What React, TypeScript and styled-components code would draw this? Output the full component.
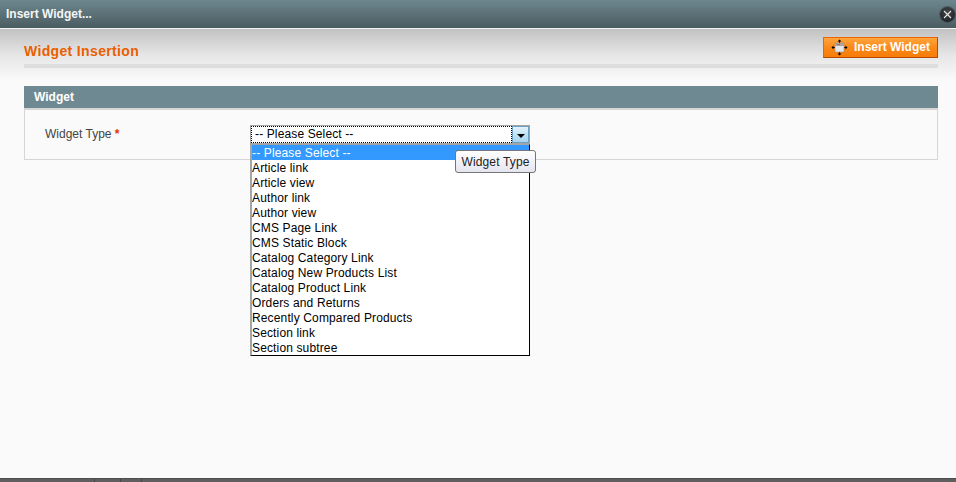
import React from "react";
import styled, { createGlobalStyle } from "styled-components";

const OPTIONS = [
  "-- Please Select --",
  "Article link",
  "Article view",
  "Author link",
  "Author view",
  "CMS Page Link",
  "CMS Static Block",
  "Catalog Category Link",
  "Catalog New Products List",
  "Catalog Product Link",
  "Orders and Returns",
  "Recently Compared Products",
  "Section link",
  "Section subtree",
];

const GlobalStyle = createGlobalStyle`
  html, body {
    margin: 0;
    padding: 0;
    height: 100%;
    overflow: hidden;
    background: #fafafa;
  }
  body {
    font-family: "Liberation Sans", Arial, sans-serif;
    font-size: 12px;
  }
`;

const Page = styled.div`
  width: 956px;
  height: 482px;
  display: flex;
  flex-direction: column;
  background: #fafafa;
`;

const TitleBar = styled.header`
  height: 27px;
  flex: none;
  display: flex;
  align-items: center;
  justify-content: space-between;
  padding: 0 1px 1px 6px;
  border-bottom: 1px solid #f4f6f6;
  background: linear-gradient(to bottom, #6d868d 0%, #4a5c62 100%);
`;

const Title = styled.span`
  color: #f4f6f6;
  font-weight: bold;
  font-size: 12px;
`;

const CloseButton = styled.button`
  width: 15px;
  height: 15px;
  padding: 0;
  margin: 1px 0 0;
  border: 0;
  border-radius: 50%;
  background: radial-gradient(circle at 50% 35%, #44484b, #15181a);
  box-shadow: 0 0 0 1px rgba(60, 75, 80, 0.6);
  display: flex;
  align-items: center;
  justify-content: center;
`;

const Content = styled.main`
  flex: 1;
  display: flex;
  flex-direction: column;
  padding: 9px 18px 0 24px;
  background: linear-gradient(to bottom, #c2c2c2 0px, #e6e6e6 26px, #fafafa 52px);
`;

const ContentHeader = styled.div`
  height: 25px;
  display: flex;
  align-items: center;
  justify-content: space-between;
  padding-bottom: 1px;
  border-bottom: 4px solid #dedede;
  box-sizing: content-box;
`;

const Heading = styled.h3`
  margin: 1px 0 0;
  color: #eb5e00;
  font-size: 14px;
  font-weight: bold;
  letter-spacing: 0.35px;
`;

const InsertButton = styled.button`
  width: 115px;
  height: 21px;
  margin-top: -6px;
  padding: 0 0 0 7px;
  display: flex;
  align-items: center;
  gap: 6px;
  box-sizing: border-box;
  border: 1px solid #ed6502;
  border-bottom-color: #b54a00;
  border-right-color: #b54a00;
  background: linear-gradient(to bottom, #ffa63f 0%, #fb8a1b 45%, #f77c08 100%);
  color: #fff;
  font-family: "Liberation Sans", Arial, sans-serif;
  font-size: 12px;
  font-weight: bold;
`;

const ButtonLabel = styled.span`
  line-height: 15px;
  margin-top: -1px;
`;

const SectionHead = styled.div`
  margin-top: 18px;
  height: 22px;
  display: flex;
  align-items: center;
  padding-left: 10px;
  background: #6f8992;
  color: #fff;
  font-size: 12px;
  font-weight: bold;
`;

const Fieldset = styled.section`
  height: 52px;
  box-sizing: border-box;
  border: 1px solid #d6d6d6;
  border-top-width: 2px;
  padding: 15px 0 0 20px;
  display: flex;
  align-items: flex-start;
`;

const Label = styled.label`
  width: 205px;
  flex: none;
  padding-top: 2px;
  color: #444;
  font-size: 12px;
`;

const Required = styled.span`
  color: #eb340a;
  font-weight: bold;
`;

const SelectWrap = styled.div`
  position: relative;
  width: 280px;
  height: 19px;
`;

const SelectBox = styled.div`
  height: 19px;
  box-sizing: border-box;
  border: 1px solid #a5a5a5;
  border-right-color: #9aa7ad;
  background: #fff;
  display: flex;
  align-items: stretch;
`;

const SelectValue = styled.div`
  flex: 1;
  outline: 1px dotted #000;
  outline-offset: -1px;
  padding-left: 4px;
  line-height: 16px;
  color: #000;
  font-size: 12px;
  letter-spacing: 0.13px;
`;

const Arrow = styled.div`
  width: 17px;
  flex: none;
  box-sizing: border-box;
  border: 1px solid #6f9fc0;
  background: linear-gradient(to bottom, #e4f3fb 0%, #bfe2f5 50%, #a6d5ef 100%);
  display: flex;
  align-items: center;
  justify-content: center;
`;

const ArrowGlyph = styled.span`
  width: 0;
  height: 0;
  margin-top: 2px;
  border-left: 4px solid transparent;
  border-right: 4px solid transparent;
  border-top: 4px solid #000;
`;

const Dropdown = styled.ul`
  position: absolute;
  z-index: 2;
  top: 19px;
  left: 0;
  width: 280px;
  height: 212px;
  box-sizing: border-box;
  margin: 0;
  padding: 0;
  list-style: none;
  background: #fff;
  border: 1px solid #000;
  border-left: 2px solid #a5a5a5;
  border-top: 1px solid #a5a5a5;
`;

const Option = styled.li<{ $active?: boolean }>`
  height: 15px;
  line-height: 17px;
  font-size: 12px;
  letter-spacing: 0.14px;
  white-space: nowrap;
  color: ${(p) => (p.$active ? "#fff" : "#000")};
  background: ${(p) => (p.$active ? "#3399ff" : "transparent")};
`;

const Tooltip = styled.div`
  position: absolute;
  z-index: 3;
  top: 25px;
  left: 205px;
  width: 81px;
  height: 23px;
  box-sizing: border-box;
  border: 1px solid #767676;
  border-radius: 3px;
  background: linear-gradient(to bottom, #ffffff 0%, #e5e5f0 100%);
  color: #222;
  font-size: 12px;
  letter-spacing: 0.15px;
  line-height: 23px;
  text-align: center;
  white-space: nowrap;
`;

const FooterBar = styled.footer`
  height: 4px;
  flex: none;
  display: flex;
  background: #5e5e5e;
  border-top: 1px solid #4e4e4e;
  box-sizing: border-box;
`;

const FooterTab = styled.span<{ $width: number }>`
  width: ${(p) => p.$width}px;
  flex: none;
  box-sizing: border-box;
  border-right: 1px solid #444;
`;

const App = () => {
  return (
    <Page>
      <GlobalStyle />
      <TitleBar>
        <Title>Insert Widget...</Title>
        <CloseButton aria-label="Close">
          <svg width="9" height="9" viewBox="0 0 9 9">
            <path d="M1 1L8 8M8 1L1 8" stroke="#e8e8e8" strokeWidth="1.1" />
          </svg>
        </CloseButton>
      </TitleBar>
      <Content>
        <ContentHeader>
          <Heading>Widget Insertion</Heading>
          <InsertButton>
            <svg width="17" height="17" viewBox="0 0 17 17">
              <path d="M8.5 2V4M8.5 13V15M2 8.5H4M13 8.5H15" stroke="#000" />
              <path
                d="M8.5 0.5L10.5 2.5H6.5ZM8.5 16.5L6.5 14.5H10.5ZM0.5 8.5L2.5 6.5V10.5ZM16.5 8.5L14.5 10.5V6.5Z"
                fill="#000"
              />
              <rect x="4" y="4" width="9" height="9" fill="#e4e7ec" stroke="#8d8d8d" strokeWidth="0.6" />
              <rect x="4" y="4" width="9" height="3" fill="#a9a4a0" />
              <rect x="6" y="5" width="3" height="1" fill="#d9534a" />
            </svg>
            <ButtonLabel>Insert Widget</ButtonLabel>
          </InsertButton>
        </ContentHeader>
        <SectionHead>Widget</SectionHead>
        <Fieldset>
          <Label>
            Widget Type <Required>*</Required>
          </Label>
          <SelectWrap>
            <SelectBox>
              <SelectValue>-- Please Select --</SelectValue>
              <Arrow>
                <ArrowGlyph />
              </Arrow>
            </SelectBox>
            <Dropdown>
              {OPTIONS.map((name, i) => (
                <Option key={name} $active={i === 0}>
                  {name}
                </Option>
              ))}
            </Dropdown>
            <Tooltip>Widget Type</Tooltip>
          </SelectWrap>
        </Fieldset>
      </Content>
      <FooterBar>
        <FooterTab $width={95} />
        <FooterTab $width={26} />
        <FooterTab $width={21} />
      </FooterBar>
    </Page>
  );
};

export default App;
